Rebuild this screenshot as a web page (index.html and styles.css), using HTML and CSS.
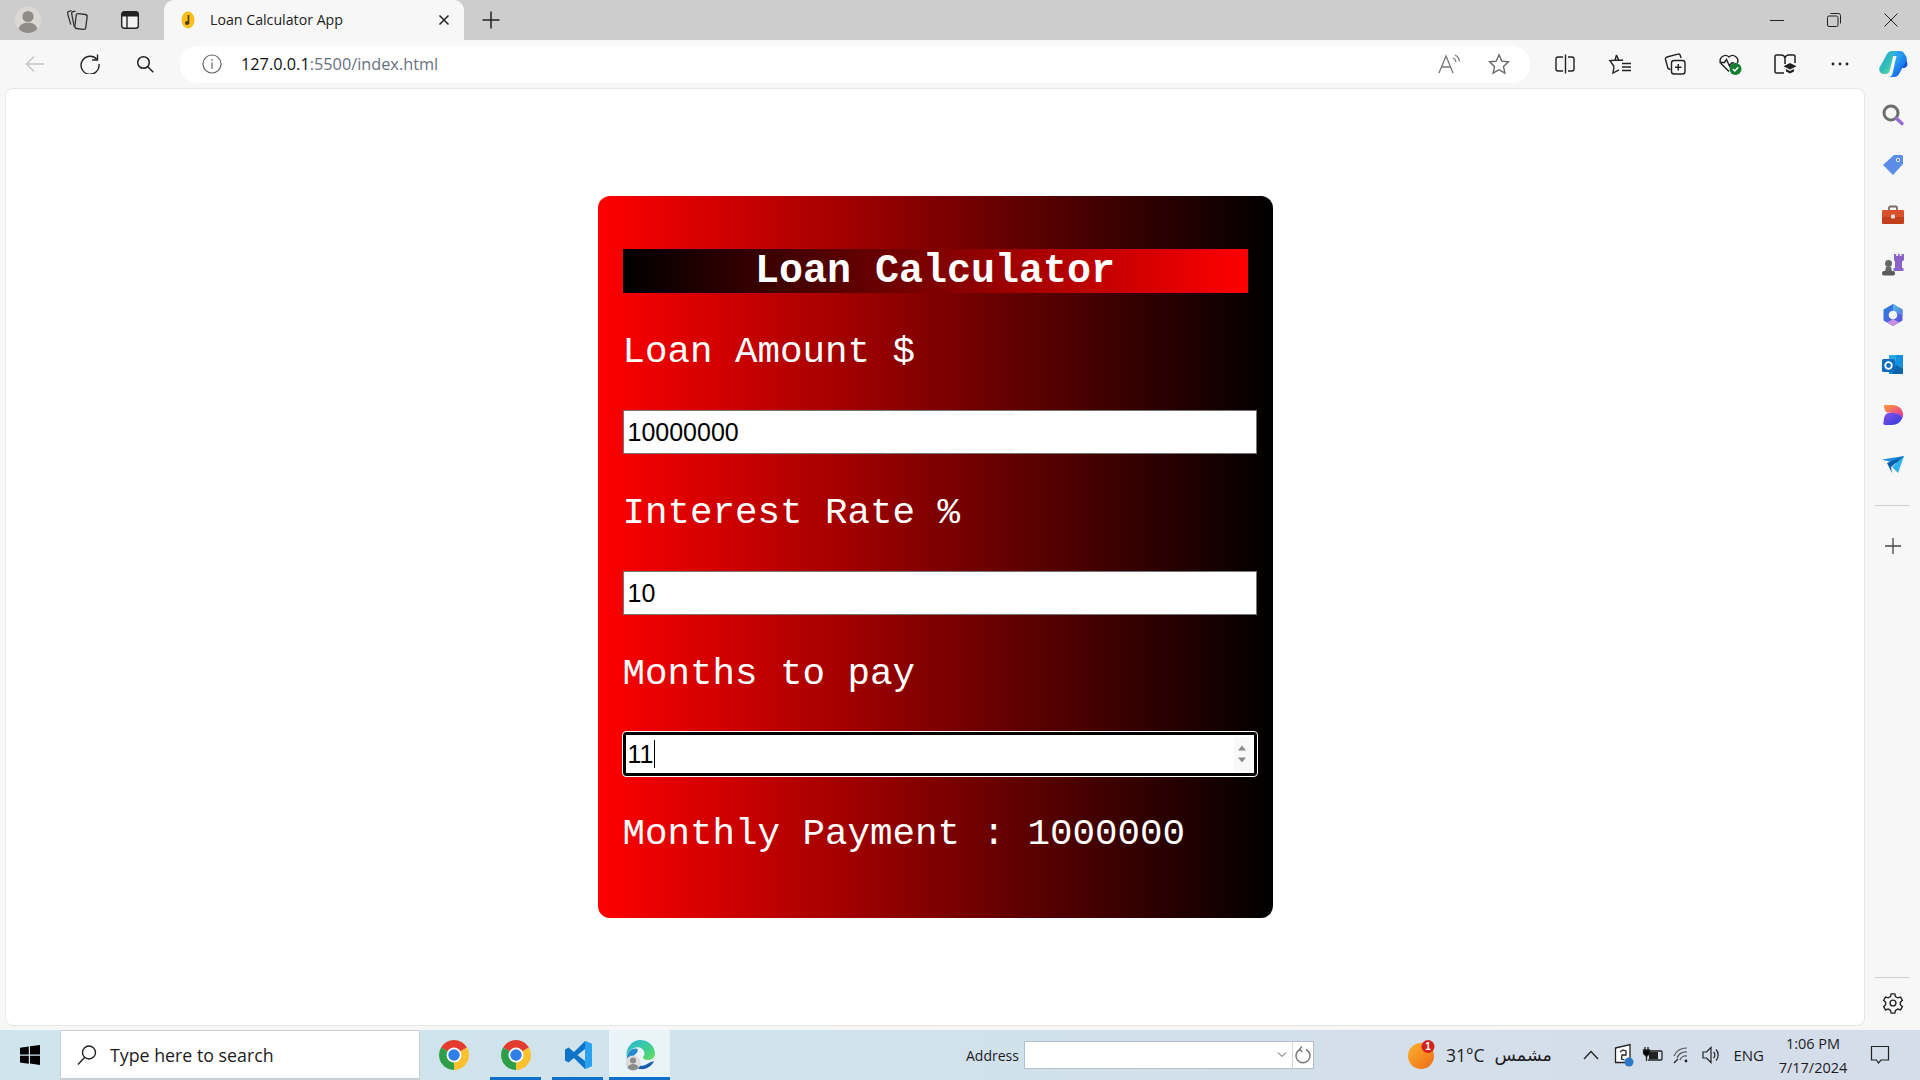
FILE: index.html
```html
<!DOCTYPE html>
<html lang="en">
<head>
<meta charset="utf-8">
<title>Loan Calculator App</title>
<link rel="stylesheet" href="styles.css">
</head>
<body>
<svg class="defs" width="0" height="0" aria-hidden="true">
  <defs>
    <symbol id="chrome" viewBox="0 0 24 24">
      <path fill="#e33b2e" d="M12 12L1.61 6A12 12 0 0 1 22.39 6Z"/>
      <path fill="#fbc02d" d="M12 12L22.39 6A12 12 0 0 1 12 24Z"/>
      <path fill="#2e9e48" d="M12 12L12 24A12 12 0 0 1 1.61 6Z"/>
      <circle cx="12" cy="12" r="6" fill="#fff"/>
      <circle cx="12" cy="12" r="4.6" fill="#2f7fe8"/>
    </symbol>
  </defs>
</svg>

<header class="tabstrip">
  <div class="cell cell-avatar">
    <svg width="28" height="28" viewBox="0 0 28 28"><circle cx="14" cy="14" r="13.5" fill="#dad8d2"/><circle cx="14" cy="10.5" r="5.6" fill="#8f8c87"/><path fill="#8f8c87" d="M4.6 23c1-4.6 4.6-6.3 9.4-6.3s8.400 1.700 9.400 6.300a13 13 0 0 1-18.800 0z"/></svg>
  </div>
  <div class="cell cell-coll">
    <svg width="24" height="24" viewBox="0 0 24 24" fill="none" stroke="#333" stroke-width="1.300"><rect x="10.500" y="6" width="11" height="15" rx="2" transform="rotate(7 16 13.500)"/><path d="M10.500 3.200l-2.400.5a1.800 1.800 0 0 0-1.400 2.100l2.600 13"/><path d="M6.500 2.600l-2.700.8A1.800 1.800 0 0 0 2.600 5.600l3.200 11"/></svg>
  </div>
  <div class="cell cell-vtab">
    <svg width="20" height="20" viewBox="0 0 20 20"><rect x="1.700" y="1.700" width="16.600" height="16.600" rx="2.500" fill="#f2f2f2" stroke="#222" stroke-width="1.400"/><path fill="#222" d="M2 4a2 2 0 0 1 2-2h12a2 2 0 0 1 2 2v2.500H2z"/><path stroke="#222" stroke-width="1.400" d="M7 6v12"/></svg>
  </div>
  <div class="tab">
    <svg class="favicon" width="14" height="18" viewBox="0 0 14 18"><ellipse cx="7" cy="9" rx="6.500" ry="8.500" fill="#f7be1c"/><path stroke="#4a3a10" stroke-width="1.600" d="M7.500 4v9"/><circle cx="6" cy="12" r="2" fill="#4a3a10"/></svg>
    <span class="tab-title">Loan Calculator App</span>
    <svg width="12" height="12" viewBox="0 0 12 12" stroke="#222" stroke-width="1.500"><path d="M1.500 1.500l9 9M10.500 1.500l-9 9"/></svg>
  </div>
  <div class="cell cell-new">
    <svg width="20" height="20" viewBox="0 0 20 20" stroke="#222" stroke-width="1.500"><path d="M10 1.500v17M1.500 10h17"/></svg>
  </div>
  <div class="spacer"></div>
  <div class="cell cell-win"><svg width="14" height="14" viewBox="0 0 14 14" stroke="#222" stroke-width="1"><path d="M0 7.500h14"/></svg></div>
  <div class="cell cell-win"><svg width="14" height="14" viewBox="0 0 14 14" fill="none" stroke="#222" stroke-width="1"><rect x=".5" y="3" width="10.500" height="10.500" rx="1.500"/><path d="M3.500 .5h8a2 2 0 0 1 2 2v8"/></svg></div>
  <div class="cell cell-win"><svg width="14" height="14" viewBox="0 0 14 14" stroke="#222" stroke-width="1"><path d="M.5 .5l13 13M13.500 .5l-13 13"/></svg></div>
</header>

<nav class="toolbar">
  <div class="cell cell-tool"><svg width="20" height="20" viewBox="0 0 20 20" fill="none" stroke="#c4c4c4" stroke-width="1.400"><path d="M19 10H1.500M9 2.500L1.500 10l7.500 7.500"/></svg></div>
  <div class="cell cell-tool"><svg width="20" height="20" viewBox="0 0 20 20" fill="none" stroke="#222" stroke-width="1.400"><path d="M17 5.500A9 9 0 1 0 19 10"/><path d="M17.500 .5v5.500h-5.500"/></svg></div>
  <div class="cell cell-tool"><svg width="18" height="18" viewBox="0 0 18 18" fill="none" stroke="#222" stroke-width="1.500"><circle cx="7.500" cy="7.500" r="5.800"/><path d="M11.800 11.800l5.500 5.500"/></svg></div>
  <div class="address">
    <svg class="addr-info" width="20" height="20" viewBox="0 0 20 20" fill="none" stroke="#666" stroke-width="1.200"><circle cx="10" cy="10" r="9"/><path d="M10 8.500v6.500M10 5v1.800"/></svg>
    <span class="url"><span class="url-host">127.0.0.1</span>:5500/index.html</span>
    <span class="spacer"></span>
    <svg class="addr-read" width="24" height="22" viewBox="0 0 24 22" fill="none" stroke="#777" stroke-width="1.300"><path d="M1 20L8 3l7 17M3.500 14h9"/><path d="M15 5a5 5 0 0 1 3 4M17 2a8 8 0 0 1 4.500 6.500"/></svg>
    <svg class="addr-star" width="22" height="22" viewBox="0 0 24 24" fill="none" stroke="#666" stroke-width="1.500"><path d="M12 2l3 6.800 7.300.8-5.400 5 1.500 7.300-6.400-3.700-6.400 3.700 1.500-7.300-5.400-5 7.300-.8z"/></svg>
  </div>
  <div class="cell cell-tool cell-first"><svg width="22" height="22" viewBox="0 0 22 22" fill="none" stroke="#222" stroke-width="1.400"><path d="M9 4H4a2 2 0 0 0-2 2v10a2 2 0 0 0 2 2h5M14 4h4a2 2 0 0 1 2 2v10a2 2 0 0 1-2 2h-4M11.500 1.500v19"/></svg></div>
  <div class="cell cell-tool"><svg width="24" height="22" viewBox="0 0 24 22" fill="none" stroke="#222" stroke-width="1.400"><path d="M8.500 2l2.300 5.300H15M6 13.500L5 20l6-3.200M15 7.300l-8 0-5 .3 4 5.900M8.500 2L7 7.300"/><path d="M14 10.500h9M14 14h9M14 17.500h9"/></svg></div>
  <div class="cell cell-tool"><svg width="24" height="24" viewBox="0 0 24 24" fill="none" stroke="#222" stroke-width="1.400"><rect x="8.500" y="8.500" width="13.500" height="13.500" rx="2.500"/><path d="M15.200 12v6.500M12 15.200h6.500"/><path d="M18 6l-.7-2.500a2 2 0 0 0-2.500-1.300L4 5a2 2 0 0 0-1.500 2.500l2.500 9 2.500 1"/></svg></div>
  <div class="cell cell-tool">
    <svg width="26" height="24" viewBox="0 0 26 24"><path fill="none" stroke="#222" stroke-width="1.400" d="M12 19.500l-8-8A5.200 5.200 0 0 1 12 5a5.200 5.200 0 0 1 8 6.500M2.500 10.500h5l2-3 3 6.500 2-3h3"/><circle cx="18.500" cy="17" r="6" fill="#14802f"/><path fill="none" stroke="#fff" stroke-width="1.500" d="M15.800 17l2 2 3.500-3.800"/></svg>
  </div>
  <div class="cell cell-tool">
    <svg width="24" height="24" viewBox="0 0 24 24"><path fill="none" stroke="#222" stroke-width="1.500" d="M11 21H3.500A1.500 1.500 0 0 1 2 19.500V4.500A1.500 1.500 0 0 1 3.500 3H8a4 4 0 0 1 4 3 4 4 0 0 1 4-3h4.500A1.500 1.500 0 0 1 22 4.500V11M12 6v6"/><path fill="#222" d="M17 11l6.500 3.200L17 17.400l-6.500-3.200z"/><path fill="#222" d="M13 17l4 2 4-2v2.500l-4 2-4-2z"/></svg>
  </div>
  <div class="cell cell-tool"><svg width="18" height="4" viewBox="0 0 18 4" fill="#222"><circle cx="2" cy="2" r="1.400"/><circle cx="9" cy="2" r="1.400"/><circle cx="16" cy="2" r="1.400"/></svg></div>
  <div class="cell cell-copilot">
    <svg width="30" height="30" viewBox="0 0 30 30"><defs><linearGradient id="cp1" x1="0" y1="0" x2="1" y2="1"><stop offset="0" stop-color="#1c9ce8"/><stop offset=".55" stop-color="#36c2b4"/><stop offset="1" stop-color="#9be59a"/></linearGradient><linearGradient id="cp2" x1="0" y1="0" x2="1" y2="1"><stop offset="0" stop-color="#3dd0f2"/><stop offset=".6" stop-color="#1b7cf0"/><stop offset="1" stop-color="#1c3fcf"/></linearGradient></defs><path fill="url(#cp2)" d="M14 2h8c2.500 0 4 1.500 5 4l2.300 8c.6 2.500-1 5-3.800 5H22l-1-8c-.4-3-1.500-4-3.500-4H8z"/><path fill="url(#cp1)" d="M9 5c1-2 3-3 5-3h5.500c-2 0-3.500 1.300-4 3.500L12 21c-.6 2.500-2 4-4 4H6c-3.500 0-5.500-3-4.500-6.500z"/><path fill="url(#cp2)" d="M21 25c-1 2-3 3-5 3h-5.500c2 0 3.500-1.300 4-3.500L18 9c.6-2.500 2-4 4-4h2c3.500 0 5.500 3 4.500 6.500z"/></svg>
  </div>
</nav>

<div class="workspace">
  <main class="page">
    <section class="card">
      <h1 class="card-title">Loan Calculator</h1>
      <div class="field">
        <label class="field-label" for="amount">Loan Amount $</label>
        <input class="field-input" id="amount" type="text" value="10000000">
      </div>
      <div class="field">
        <label class="field-label" for="rate">Interest Rate %</label>
        <input class="field-input" id="rate" type="text" value="10">
      </div>
      <div class="field">
        <span class="field-label">Months to pay</span>
        <div class="field-input field-focused">
          <span>11</span><span class="caret"></span>
          <span class="spacer"></span>
          <span class="spinner"><svg width="10" height="20" viewBox="0 0 10 20" fill="#8a8a8a"><path d="M5 1.500L9 6.500H1zM5 18.500L1 13.500h8z"/></svg></span>
        </div>
      </div>
      <p class="result">Monthly Payment : 1000000</p>
    </section>
  </main>
  <aside class="sidebar">
    <div class="side-cell"><svg width="24" height="24" viewBox="0 0 24 24" fill="none"><circle cx="10" cy="10" r="7" stroke="#6e6e6e" stroke-width="3"/><path stroke="#9a6bd0" stroke-width="3.500" stroke-linecap="round" d="M15.500 15.500l5.500 5"/></svg></div>
    <div class="side-cell"><svg width="22" height="22" viewBox="0 0 22 22"><path fill="#5a8de6" d="M12 1h7.500A1.500 1.500 0 0 1 21 2.500V10L11 21 1 11z"/><circle cx="16" cy="6" r="2" fill="#fff"/><circle cx="16" cy="6" r="1" fill="#2c4fa8"/></svg></div>
    <div class="side-cell"><svg width="24" height="20" viewBox="0 0 24 20"><path fill="none" stroke="#7a6a60" stroke-width="1.800" d="M8 5V3a1.500 1.500 0 0 1 1.500-1.500h5A1.500 1.500 0 0 1 16 3v2"/><path fill="#d9512c" d="M2 5h20a1 1 0 0 1 1 1v6H1V6a1 1 0 0 1 1-1z"/><path fill="#c33f1b" d="M1 12h22v6a1 1 0 0 1-1 1H2a1 1 0 0 1-1-1z"/><rect x="10" y="9.500" width="4" height="4" rx="1" fill="#ddd"/></svg></div>
    <div class="side-cell"><svg width="24" height="24" viewBox="0 0 24 24"><path fill="#8b62c7" d="M13 1h2.200v2h1.800V1h1.800v2h1.800V1H23v6l-2 1.500V15h1.500v3h-10v-3H14V8.500L13 7z"/><circle cx="7.500" cy="10.500" r="3.500" fill="#666"/><path fill="#666" d="M5 14h5l1 4.500H4z"/><rect x="1" y="18" width="13" height="4.500" rx="2" fill="#5a5a5a"/></svg></div>
    <div class="side-cell"><svg width="22" height="22" viewBox="0 0 22 22"><defs><linearGradient id="m365a" x1="0" y1="0" x2="1" y2="1"><stop offset="0" stop-color="#2a7fe0"/><stop offset="1" stop-color="#6a52d8"/></linearGradient><linearGradient id="m365b" x1="0" y1="0" x2="1" y2="1"><stop offset="0" stop-color="#4fc0e8"/><stop offset="1" stop-color="#5d7be0"/></linearGradient></defs><path fill="url(#m365a)" d="M11 0l9.500 5.500v11L11 22 1.500 16.500v-11z"/><path fill="url(#m365b)" d="M11 0l9.500 5.500v6L11 7z"/><path fill="#c88fe6" d="M5 18.500L11 15l6 3.500-6 3.500z"/><circle cx="11" cy="11" r="4.300" fill="#f6f6f6"/></svg></div>
    <div class="side-cell"><svg width="22" height="22" viewBox="0 0 22 22"><path fill="#1490df" d="M7 1h14v19H7z"/><path fill="#28a8ea" d="M7 1h7v6H7z"/><path fill="#0a64ad" d="M14 11l7 4v5H10z"/><rect x="0" y="5" width="13" height="13" rx="1.500" fill="#0f6cbd"/><circle cx="6.500" cy="11.500" r="3.300" fill="none" stroke="#fff" stroke-width="1.800"/></svg></div>
    <div class="side-cell"><svg width="22" height="22" viewBox="0 0 22 22"><defs><linearGradient id="drop1" x1="0" y1="0" x2="1" y2="1"><stop offset="0" stop-color="#ff9a3d"/><stop offset="1" stop-color="#e02f9e"/></linearGradient><linearGradient id="drop2" x1="0" y1="0" x2="1" y2="1"><stop offset="0" stop-color="#8a52e8"/><stop offset="1" stop-color="#2d3cdb"/></linearGradient></defs><path fill="url(#drop1)" d="M2 1h8a10 10 0 0 1 11 10c0 1-.3 2-.6 2.500C17 9 10 8.500 5 8.500 3 8 2 4 2 1z"/><path fill="url(#drop2)" d="M6 9c6-1 12 .5 14.500 4.500C19 18 15 21 10 21H3c-1.500 0-2-1-1.500-3C2 13 3 10 6 9z"/></svg></div>
    <div class="side-cell"><svg width="22" height="18" viewBox="0 0 22 18"><path fill="#1a8de0" d="M0 3.500L22 0 18 8.500z"/><path fill="#31b0ee" d="M22 0l-6 17-6-6z"/><path fill="#0b5fa8" d="M5 7l17-7L9 11l1 6z"/></svg></div>
    <div class="side-rule"></div>
    <div class="side-cell side-plus"><svg width="16" height="16" viewBox="0 0 16 16" stroke="#444" stroke-width="1.300"><path d="M8 0v16M0 8h16"/></svg></div>
    <div class="spacer"></div>
    <div class="side-rule side-rule-low"></div>
    <div class="side-cell"><svg width="22" height="22" viewBox="0 0 24 24" fill="none" stroke="#222" stroke-width="1.500"><circle cx="12" cy="12" r="3.200"/><path d="M10 2h4l.7 3 2.500 1.400 3-.9 2 3.500-2.200 2.100v2.800l2.200 2.100-2 3.500-3-.9-2.500 1.400-.7 3h-4l-.7-3-2.500-1.400-3 .9-2-3.500 2.200-2.100v-2.800L1.800 9l2-3.500 3 .9L9.300 5z"/></svg></div>
  </aside>
</div>

<footer class="taskbar">
  <div class="start">
    <svg width="20" height="20" viewBox="0 0 20 20" fill="#000"><path d="M0 2.800l8.800-1.300v8H0zM10 1.300L20 0v9.500H10zM0 10.700h8.800v8L0 17.400zM10 10.700h10V20l-10-1.400z"/></svg>
  </div>
  <div class="search">
    <svg width="20" height="22" viewBox="0 0 20 22" fill="none" stroke="#222" stroke-width="1.400"><circle cx="12" cy="8.500" r="6.500"/><path d="M7.500 13.500L1 20.500"/></svg>
    <span>Type here to search</span>
  </div>
  <div class="apps">
    <div class="app"><svg width="30" height="30"><use href="#chrome"/></svg></div>
    <div class="app app-open"><svg width="30" height="30"><use href="#chrome"/></svg></div>
    <div class="app app-open"><svg class="app-code" width="30" height="30" viewBox="0 0 30 30"><path fill="#0f74c8" d="M21 1L10 12 4.500 7.500 1 9.500v11l3.500 2L10 18l11 11 7-3V4zM21 9v12l-7.500-6z" fill-rule="evenodd"/><path fill="#29a3ef" d="M21 1l7 3v22l-7 3V21l0-12z"/></svg></div>
    <div class="app app-active">
      <svg width="32" height="32" viewBox="0 0 32 32"><defs><linearGradient id="edgeA" x1="0" y1="0" x2="1" y2="1"><stop offset="0" stop-color="#2bb5e0"/><stop offset=".6" stop-color="#3ecf8e"/><stop offset="1" stop-color="#6fdc5a"/></linearGradient><linearGradient id="edgeB" x1="0" y1="0" x2="1" y2="1"><stop offset="0" stop-color="#1f78c8"/><stop offset="1" stop-color="#0c4e9c"/></linearGradient></defs><path fill="url(#edgeA)" d="M16 1c8 0 15 6 15 13.500 0 4-3 6.500-7 6.500-3 0-5-1-5-2.500 0-1 1.500-1.500 1.500-4C20.500 10 15 7 10 9 6 10.500 3.500 14 3 18 1 11 7 1 16 1z"/><path fill="url(#edgeB)" d="M30 22c-2 5-8 9-14 8-4-.5-5.500-3-5-5 3 2.500 9 2.500 13-.5 2-1 4-2 6-2.500z"/><path fill="#2688cf" d="M3 18c.5-5 5-9 9-8.500 3 .4 2 4-1 6-3 2-2 8-1 13C5 27 2 23 3 18z"/><circle cx="9" cy="24" r="7.500" fill="#dcdcdc"/><circle cx="9" cy="21.500" r="3" fill="#8c8c8c"/><path fill="#8c8c8c" d="M3.500 29c.6-3 3-4 5.500-4s5 1 5.500 4a7.500 7.500 0 0 1-11 0z"/></svg>
    </div>
  </div>
  <div class="addr-band">
    <span class="addr-label">Address</span>
    <div class="addr-box">
      <span class="spacer"></span>
      <svg class="addr-chev" width="10" height="6" viewBox="0 0 10 6" fill="none" stroke="#555"><path d="M1 .5l4 4 4-4"/></svg>
      <span class="addr-go"><svg width="16" height="18" viewBox="0 0 16 18" fill="none" stroke="#777" stroke-width="1.400"><path d="M5 3.500a7 7 0 1 0 6 0"/><path d="M7 .5L4.500 3.500 7.500 6"/></svg></span>
    </div>
  </div>
  <div class="weather">
    <svg width="32" height="32" viewBox="0 0 32 32"><defs><linearGradient id="sun" x1="0" y1="0" x2="1" y2="1"><stop offset="0" stop-color="#fbb329"/><stop offset="1" stop-color="#ee6a1a"/></linearGradient></defs><circle cx="14" cy="17" r="13" fill="url(#sun)"/><circle cx="21" cy="7.500" r="6.500" fill="#d3231f"/><text class="badge-num" x="21" y="11">1</text></svg>
    <span class="temp">31°C</span>
    <span class="cond" lang="ar" dir="rtl">مشمس</span>
  </div>
  <div class="tray">
    <svg class="tray-up" width="16" height="10" viewBox="0 0 16 10" fill="none" stroke="#222" stroke-width="1.300"><path d="M1 9l7-7.500L15 9"/></svg>
    <svg class="tray-icon tray-first" width="22" height="24" viewBox="0 0 22 24"><path fill="#fff" stroke="#222" stroke-width="1.300" d="M2.500 5L17 1.500v18H2.500z"/><path fill="none" stroke="#222" stroke-width="1.300" d="M7 9l3-2 3 1v4H9l-.5 4 3 1"/><circle cx="16" cy="19" r="4.500" fill="#2d78c9"/></svg>
    <svg class="tray-icon" width="22" height="18" viewBox="0 0 22 18"><path fill="none" stroke="#222" stroke-width="1.300" d="M6 5h13a1 1 0 0 1 1 1v7a1 1 0 0 1-1 1H6"/><rect x="7" y="6" width="9" height="7" fill="#222"/><path stroke="#222" stroke-width="1.300" d="M3 1v3M6 1v3M1.500 4h6v3.500L5 10H4L1.500 7.500zM4.500 10v5"/></svg>
    <svg class="tray-icon" width="20" height="18" viewBox="0 0 20 18" fill="none" stroke="#555" stroke-width="1.200"><path d="M1 10a14 14 0 0 1 13-8M4 12a10 10 0 0 1 10-6M7 14a6 6 0 0 1 7-4"/><circle cx="13" cy="15" r="1.400" fill="#222" stroke="none"/><path stroke="#222" d="M1 17l4-4"/></svg>
    <svg class="tray-icon" width="18" height="18" viewBox="0 0 18 18" fill="none" stroke="#222" stroke-width="1.200"><path d="M1 6h3.500L9 1.500v15L4.500 12H1z"/><path d="M11.500 6a4 4 0 0 1 0 6M14 3.500a8 8 0 0 1 0 11"/></svg>
    <span class="tray-lang">ENG</span>
    <div class="clock"><span>1:06 PM</span><span>7/17/2024</span></div>
    <svg class="tray-note" width="20" height="20" viewBox="0 0 20 20" fill="none" stroke="#222" stroke-width="1.200"><path d="M1.500 1.500h17v13.500H11l-2.500 3-2-3h-5z"/></svg>
  </div>
</footer>
</body>
</html>
```

FILE: styles.css
```css
* { box-sizing: border-box; }

html, body {
  margin: 0;
  height: 100%;
}

body {
  width: 1920px;
  height: 1080px;
  overflow: hidden;
  display: flex;
  flex-direction: column;
  background: #f7f7f7;
  font-family: "Open Sans", "Noto Sans", sans-serif;
  color: #1a1a1a;
}

.defs { position: absolute; }
.spacer { flex: 1; }

.cell {
  display: flex;
  align-items: center;
  justify-content: center;
  flex-shrink: 0;
}

/* tab strip */
.tabstrip {
  height: 40px;
  flex-shrink: 0;
  display: flex;
  padding-left: 8px;
  padding-right: 1px;
  background: #cdcdcd;
}
.cell-avatar { width: 40px; }
.cell-coll { width: 58px; }
.cell-vtab { width: 48px; }
.cell-new { width: 54px; }
.cell-win { width: 57px; }

.tab {
  width: 300px;
  margin-left: 10px;
  display: flex;
  align-items: center;
  padding: 0 14px 0 17px;
  background: #f7f7f7;
  border-radius: 10px 10px 0 0;
}
.favicon { flex-shrink: 0; }
.tab-title {
  flex: 1;
  margin: 0 0 2px 15px;
  font-size: 14.2px;
  color: #222;
}

/* toolbar */
.toolbar {
  height: 48px;
  flex-shrink: 0;
  display: flex;
  align-items: center;
  padding-left: 7px;
  background: #f7f7f7;
}
.cell-tool { width: 55px; height: 40px; }
.cell-first { margin-left: 7px; }
.cell-copilot { width: 51px; height: 40px; }

.address {
  width: 1350px;
  height: 37px;
  margin-left: 8px;
  display: flex;
  align-items: center;
  padding-left: 22px;
  background: #fff;
  border-radius: 18px;
}
.addr-info { flex-shrink: 0; }
.url {
  margin-left: 19px;
  font-size: 16.3px;
  color: #66717f;
}
.url-host { color: #111; }
.addr-read { margin-right: 26px; }
.addr-star { margin-right: 20px; }

/* main */
.workspace {
  flex: 1;
  min-height: 0;
  display: flex;
}
.page {
  width: 1860px;
  margin-left: 5px;
  margin-bottom: 4px;
  display: flex;
  justify-content: center;
  align-items: flex-start;
  padding-top: 107px;
  background: #fff;
  border: 1px solid #e6e6e6;
  border-left-color: #ececec;
  border-radius: 8px;
}

.card {
  width: 675px;
  height: 722px;
  padding: 53px 25px 0;
  color: #fff;
  background: linear-gradient(to right, #f00, #000);
  border-radius: 12px;
  font-family: "Courier New", "Liberation Mono", monospace;
}
.card-title {
  margin: 0;
  height: 44px;
  font-size: 40px;
  line-height: 46px;
  font-weight: 700;
  text-align: center;
  background: linear-gradient(to right, #000, #f00);
}
.field { margin-top: 38px; }
.field-label {
  display: block;
  height: 42px;
  margin-bottom: 37px;
  font-size: 37.5px;
  line-height: 42px;
  font-weight: 400;
}
.field + .field { margin-top: 38px; }
.field-input {
  display: flex;
  align-items: center;
  width: 634px;
  height: 44px;
  margin: 0;
  padding: 0 4px;
  font-family: "Liberation Sans", Arial, sans-serif;
  font-size: 25px;
  color: #000;
  background: #fff;
  border: 1px solid #767676;
  border-radius: 0;
}
.field-focused {
  padding: 0 2px;
  height: 44px;
  border: 3px solid #000;
  border-radius: 3px;
  outline: 1px solid #fff;
  outline-offset: 0;
}
.caret {
  width: 1px;
  height: 28px;
  margin-left: 1px;
  background: #000;
}
.spinner {
  display: flex;
  align-items: center;
  justify-content: center;
  width: 17px;
  height: 34px;
  margin-right: 1px;
  background: #f8f8f8;
}
.result {
  margin: 37px 0 0;
  height: 42px;
  font-size: 37.5px;
  line-height: 42px;
}

/* sidebar */
.sidebar {
  width: 55px;
  flex-shrink: 0;
  display: flex;
  flex-direction: column;
  align-items: center;
  padding: 2px 0 2px;
}
.side-cell {
  width: 100%;
  height: 50px;
  flex-shrink: 0;
  display: flex;
  align-items: center;
  justify-content: center;
}
.side-rule {
  width: 35px;
  height: 1px;
  margin-top: 15px;
  background: #cfcfcf;
}
.side-rule-low { margin-top: 0; }
.side-plus { margin-top: 15px; }

/* taskbar */
.taskbar {
  height: 50px;
  flex-shrink: 0;
  display: flex;
  align-items: center;
  font-size: 15px;
  color: #1c1c1c;
  background: linear-gradient(to right, #cfe5ee, #d1e2ec 50%, #d5dcea);
}
.start {
  width: 60px;
  height: 100%;
  display: flex;
  align-items: center;
  justify-content: center;
}
.search {
  width: 360px;
  height: 100%;
  display: flex;
  align-items: center;
  gap: 13px;
  padding-left: 16px;
  font-size: 17.8px;
  background: #fff;
  border: 1px solid #c8d0d6;
  border-bottom-width: 2px;
}
.apps {
  display: flex;
  gap: 1px;
  height: 100%;
  margin-left: 3px;
}
.app {
  position: relative;
  width: 61px;
  height: 100%;
  display: flex;
  align-items: center;
  justify-content: center;
}
.app-code { margin-left: 2px; }
.app-open::after,
.app-active::after {
  content: "";
  position: absolute;
  left: 5px;
  right: 5px;
  bottom: 0;
  height: 3px;
  background: #0f6fcb;
}
.app-active { background: #eaf3f8; }
.app-active::after { left: 0; right: 0; }

.addr-band {
  display: flex;
  align-items: center;
  margin-left: 296px;
}
.addr-label {
  width: 58px;
  font-size: 14px;
}
.addr-box {
  width: 290px;
  height: 28px;
  display: flex;
  align-items: center;
  background: #fff;
  border: 1px solid #b4c0cc;
}
.addr-chev { margin-right: 5px; }
.addr-go {
  width: 21px;
  height: 100%;
  display: flex;
  align-items: center;
  justify-content: center;
  border-left: 1px solid #d5d5d5;
}

.weather {
  display: flex;
  align-items: center;
  margin-left: 93px;
  font-size: 17.5px;
}
.badge-num {
  font-family: "Liberation Sans", sans-serif;
  font-size: 10px;
  font-weight: 700;
  fill: #fff;
  text-anchor: middle;
}
.temp { margin-left: 7px; }
.cond {
  margin-left: 10px;
  font-family: "DejaVu Sans", "Noto Sans", sans-serif;
  font-size: 17.5px;
}

.tray {
  display: flex;
  align-items: center;
  margin-left: auto;
  padding-right: 30px;
}
.tray-up { margin-right: 14px; }
.tray-icon { margin-right: 9px; }
.tray-first { margin-right: 7px; }
.tray-lang { margin-left: 4px; font-size: 15px; }
.clock {
  display: flex;
  flex-direction: column;
  align-items: center;
  width: 90px;
  margin: 1px 0 0 4px;
  font-size: 14.5px;
  line-height: 24px;
}
.tray-note { margin-left: 12px; }
```
